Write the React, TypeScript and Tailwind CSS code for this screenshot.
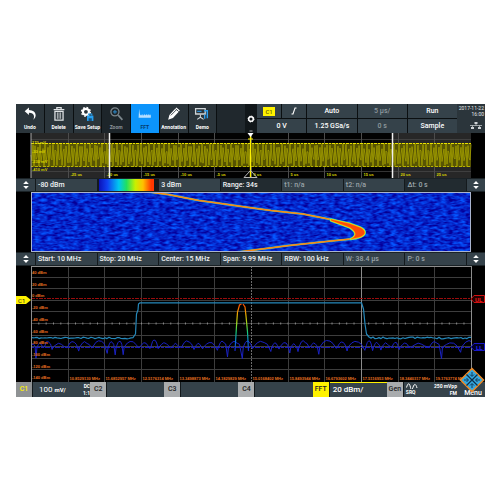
import React from "react";

const FONT = "font-['Roboto','Noto_Sans',sans-serif]";

function seeded(seed: number) {
  let s = seed;
  return () => {
    s = (s * 16807) % 2147483647;
    return s / 2147483647;
  };
}

/* ---------- toolbar ---------- */

const icons: Record<string, React.ReactNode> = {
  Undo: (
    <path d="M6.500 1.500 2.500 5 6.500 8.500V6.300c3 0 4.800 1.500 4.800 3.700 0 1-.3 2-.8 3 1.500-1.200 2.300-2.600 2.300-4.300C12.800 5.700 10.500 3.900 6.500 3.700z" fill="#fff" />
  ),
  Delete: (
    <g fill="none" stroke="#dfe3e5">
      <path d="M2.500 3.500h10M5.500 3V1.500h4V3" strokeWidth="1.200" />
      <path d="M3.700 5v8.300h7.600V5z" strokeWidth="1.200" />
      <path d="M6 6v6M7.500 6v6M9 6v6" strokeWidth=".7" />
    </g>
  ),
  "Save Setup": (
    <g>
      <circle cx="6.500" cy="5.500" r="2.800" fill="none" stroke="#fff" strokeWidth="2" />
      <circle cx="6.500" cy="5.500" r="4.100" fill="none" stroke="#fff" strokeWidth="1.300" strokeDasharray="1.600 1.620" />
      <path d="M7.500 9h6v5h-6z" fill="#27a0f0" />
      <path d="M9 9V7.500h3V9" fill="none" stroke="#27a0f0" />
      <path d="M9 11.500h3V14H9z" fill="#14507c" />
    </g>
  ),
  Zoom: (
    <g fill="none" stroke="#7c878d">
      <circle cx="6.500" cy="5.500" r="3.800" strokeWidth="1.200" />
      <path d="M9.500 8.500l4 4.500" strokeWidth="1.600" />
      <path d="M4.700 5.500h3.600M6.500 3.700v3.600" stroke="#2b7fb8" strokeWidth="1.100" />
    </g>
  ),
  FFT: (
    <path d="M2 2.500 2.600 7l.7 2 .7-1 .7 1.200.8-1.700.7 1.700.9-1.700.8 1.500.9-1.500.8 1.500.9-1.600.8 1.600.9-1.200.8 1.200v2H1.500z" fill="#b5deff" />
  ),
  Annotation: (
    <g>
      <path d="M9.700 1.500 13 4.300 6.500 11.300 2 13l1.200-4.500z" fill="#fff" />
      <path d="M4.500 8.800 10 3.300M8.800 2.500l3.200 2.800" stroke="#2b353b" strokeWidth=".8" />
    </g>
  ),
  Demo: (
    <g fill="none" stroke="#cfd5d8">
      <path d="M1.500 2.500h9v5h-9z" strokeWidth="1.200" />
      <path d="M6 8v2.500M3 12.500l3-2 3 2" strokeWidth="1" />
      <path d="M3 5h4" stroke="#2b9ff0" />
      <path d="M9.500 4.500h3v7M10 12v-4" stroke="#2b9ff0" strokeWidth="1.300" />
    </g>
  ),
};

const tools = ["Undo", "Delete", "Save Setup", "Zoom", "FFT", "Annotation", "Demo"];

function toolClass(name: string) {
  if (name === "FFT") return "bg-[#0c94fb] text-[#053a6b]";
  if (name === "Zoom") return "bg-[#1d252a] text-[#8b9398]";
  return "bg-[#2b353b] text-white";
}

function Tool({ name }: { name: string }) {
  return (
    <button className={`flex min-w-0 flex-1 flex-col items-center gap-[2px] pt-[2px] ${toolClass(name)}`}>
      <svg viewBox="0 0 15 15" className="h-4 w-4" aria-hidden="true">{icons[name]}</svg>
      <span className="text-[5px] leading-[6px] font-bold whitespace-nowrap">{name}</span>
    </button>
  );
}

function Cell({ children, dim }: { children: React.ReactNode; dim?: boolean }) {
  return (
    <div className={`flex items-center justify-center bg-[#35424a] whitespace-nowrap ${dim ? "text-[#8f999e]" : "text-white"}`}>
      {children}
    </div>
  );
}

function Toolbar() {
  return (
    <header className="grid h-[29px] grid-cols-[229fr_12px_200fr_28px] bg-[#0b0f11]">
      <div className="flex gap-px">
        {tools.map((t) => <Tool key={t} name={t} />)}
        <div className="flex-1 bg-[#20282d]" />
      </div>
      <button aria-label="Settings" className="flex flex-col items-center justify-center bg-[#11171a]">
        <svg viewBox="0 0 12 29" className="h-[29px] w-3" aria-hidden="true">
          <circle cx="6" cy="15" r="2.300" fill="none" stroke="#fff" strokeWidth="1.500" />
          <circle cx="6" cy="15" r="3" fill="none" stroke="#fff" strokeDasharray="1.200 1.156" />
          <path d="M4.500 27h3" stroke="#aaa" />
        </svg>
      </button>
      <div className="grid grid-cols-4 grid-rows-2 gap-px text-[7px] leading-[10px] font-medium">
        <div className="grid grid-cols-2 gap-px">
          <Cell><span className="bg-[#fff200] px-[2px] text-[6px] leading-[9px] text-[#6b6500]">C1</span></Cell>
          <Cell>
            <svg viewBox="0 0 8 8" className="h-2 w-2" aria-label="Rising edge"><path d="M1.500 7h1.500L5 1h1.500" fill="none" stroke="#fff" strokeWidth="1.100" /></svg>
          </Cell>
        </div>
        <Cell>Auto</Cell>
        <Cell dim>5 µs/</Cell>
        <Cell>Run</Cell>
        <Cell>0 V</Cell>
        <Cell>1.25 GSa/s</Cell>
        <Cell dim>0 s</Cell>
        <Cell>Sample</Cell>
      </div>
      <div className="flex flex-col items-end bg-[#2b353b] pt-px pr-px text-[5px] leading-[6px] text-[#e6e9ea]">
        <span className="whitespace-nowrap">2017-11-22</span>
        <span>16:00</span>
        <svg viewBox="0 0 12 9" className="mt-1 mr-[2px] h-[9px] w-3" aria-label="Network">
          <path d="M4.500 1h3v2h-3zM1 6h3v2H1zM8 6h3v2H8z" fill="#cdd2d5" />
          <path d="M0 4.500h12M6 3v1.500M2.500 4.500V6M9.500 4.500V6" stroke="#cdd2d5" strokeWidth=".7" fill="none" />
        </svg>
      </div>
    </header>
  );
}

/* ---------- time domain ---------- */

const columns = Array.from({ length: 11 }, (_, i) => Math.round((i + 1) * 36.67) + 0.5);

function wavePath() {
  const pts: string[] = [];
  for (let i = 0; i <= 440; i++) {
    const y = 22 + 11.5 * Math.sin(i * 2.45 + 1.6 * Math.sin(i * 0.09));
    pts.push(`${i},${y.toFixed(1)}`);
  }
  return pts.join(" ");
}

const times = ["-25 us", "-20 us", "-15 us", "-10 us", "-5 us", "0 us", "5 us", "10 us", "15 us", "20 us", "25 us"];
const volts: [string, number][] = [["170 mV", 11], ["-30 mV", 20], ["-230 mV", 30], ["-410 mV", 38]];

function TimePlot() {
  return (
    <svg viewBox="0 0 469 45" className="block w-full bg-black" role="img" aria-label="Time domain signal">
      <g transform="translate(15 0)">
        <path d="M0 0h440v45H0z" fill="#272727" />
        <path d="M79 0h282v45H79z" fill="#020202" />
        <path d="M0 6.500h440M0 38.500h440" stroke="#4a4a4a" strokeOpacity=".7" />
        {columns.map((x) => <path key={x} d={`M${x} 0v45`} stroke="#4c4c4c" />)}
        <path d="M0 10h440v24H0z" fill="#5e5b00" fillOpacity=".9" />
        <polyline points={wavePath()} fill="none" stroke="#a39f00" strokeWidth=".8" />
        <path d="M0 10.500h440" stroke="#e9e200" strokeDasharray="3 1 2 1" />
        <path d="M0 33.500h440" stroke="#b8b200" strokeDasharray="2 2 3 1" />
        <g className="font-['Liberation_Sans',sans-serif] text-[4px] font-bold" fill="#dcd600">
          {times.map((t, i) => <text key={t} x={columns[i] + 2} y="42.500">{t}</text>)}
          {volts.map(([t, y]) => <text key={t} x="1" y={y}>{t}</text>)}
        </g>
        <path d="M78.500 0v45M361.500 0v45" stroke="#f0f0f0" strokeWidth="1.500" />
        <path d="M219.500 3v42" stroke="#fff200" strokeWidth="1.300" />
        <path d="M216.500 0h6l-3 4z" fill="#fff" />
        <path d="M217 6h5" stroke="#fff200" />
        <path d="M213 44.500l6.500-7 6.500 7z" fill="none" stroke="#b9b9b9" />
        <path d="M0 0v45" stroke="#aaa" />
      </g>
    </svg>
  );
}

/* ---------- parameter bars ---------- */

function Spinner({ label }: { label: string }) {
  return (
    <button aria-label={label} className="flex items-center justify-center bg-[#35424a]">
      <svg viewBox="0 0 8 10" className="h-[10px] w-2" aria-hidden="true">
        <path d="M1.200 4 4 1l2.800 3zM1.200 6 4 9l2.800-3z" fill="#fff" />
      </svg>
    </button>
  );
}

type Param = { text: string; dim?: boolean; dark?: boolean };

function ParamBar({ items, label }: { items: (Param | "scale")[]; label: string }) {
  return (
    <div className="grid h-[14px] grid-cols-[19px_repeat(7,minmax(0,1fr))_18px] gap-px border-y border-[#1a2226] bg-[#141a1d] text-[7px] leading-[12px] font-medium">
      <Spinner label={`${label} previous`} />
      {items.map((it, i) =>
        it === "scale" ? (
          <div key={i} className="mr-1 ml-px bg-[linear-gradient(90deg,#0b12b8_0%,#1040f0_15%,#00c8f0_36%,#20e060_50%,#c8f000_66%,#ffc000_80%,#ff3800_95%)]" />
        ) : (
          <div key={i} className={`px-[2px] whitespace-nowrap ${it.dark ? "bg-[#222b30]" : "bg-[#35424a]"} ${it.dim ? "text-[#9ba4a9]" : "text-[#f1f3f4]"}`}>
            {it.text}
          </div>
        )
      )}
      <Spinner label={`${label} next`} />
    </div>
  );
}

/* ---------- spectrogram ---------- */

const RIDGE =
  "M118 0 137 2.500 155 6 168 8.500 190 11.500 207 14 240 18.500 272 22 300 27.500 318 32 329 37 C333 40 332 44 325 46.500 L300 49 258 53.500 235 56.500 207 60";
const CREST =
  "M300 27.500 318 31.500 329 35.500 C336 39 335 43.500 327 45.500 L320 47 C326 44 326 40 319 35.500 L300 28.500Z";

function Spectrogram() {
  return (
    <svg viewBox="0 0 469 60" className="block w-full bg-black" role="img" aria-label="Spectrogram">
      <defs>
        <filter id="grain" x="0" y="0" width="100%" height="100%" colorInterpolationFilters="sRGB">
          <feTurbulence type="fractalNoise" baseFrequency="0.16 0.4" numOctaves="2" seed="4" />
          <feColorMatrix values="0 0 0 0 0.02  0.65 0 0 0 -0.17  0.75 0 0 0 0.42  0 0 0 0 1" />
        </filter>
        <clipPath id="area"><path d="M15 0h440v60H15z" /></clipPath>
      </defs>
      <g clipPath="url(#area)">
        <path d="M15 0h440v60H15z" fill="#0726c8" />
        <path d="M15 0h440v60H15z" filter="url(#grain)" />
        <g transform="translate(15 0)" fill="none" strokeLinejoin="round">
          <path d={RIDGE} stroke="#18b8d0" strokeWidth="2.400" strokeOpacity=".6" />
          <path d={RIDGE} stroke="#f0c020" strokeWidth="1.500" />
          <path d={RIDGE} stroke="#ff6a10" strokeWidth=".8" />
          <path d={CREST} stroke="#20d8c0" strokeWidth="2.800" />
          <path d={CREST} stroke="#ffe000" strokeWidth="1.600" />
          <path d={CREST} fill="#ff4a08" stroke="#ff7a00" strokeWidth=".4" />
        </g>
        <path d="M15.500 0v60M454.500 0v60M15 .5h440M15 59.500h440" stroke="#a9b4d0" fill="none" />
      </g>
    </svg>
  );
}

/* ---------- spectrum ---------- */

const levels = ["40 dBm", "20 dBm", "0 dBm", "-20 dBm", "-40 dBm", "-60 dBm", "-80 dBm", "-100 dBm", "-120 dBm", "-140 dBm"];
const freqs = [
  "10.8529130 MHz", "11.6852957 MHz", "12.5176314 MHz", "13.3498873 MHz", "14.1829829 MHz", "15.0168402 MHz",
  "15.8493944 MHz", "16.6793602 MHz", "17.5116953 MHz", "18.3440317 MHz", "19.1763774 MHz",
];

function maxTrace() {
  const r = seeded(11);
  const pts: string[] = [];
  for (let x = 0; x <= 103; x += 2) pts.push(`${x},${(71.8 + r() * 1.6 - 0.6).toFixed(1)}`);
  pts.push("104.500,68 105.500,48 107,44 107.500,38 109,36.800 330.500,36.800 332.500,43 334,58 335.500,68 338,71");
  for (let x = 340; x <= 440; x += 2) pts.push(`${x},${(71.8 + r() * 1.8 - 0.8).toFixed(1)}`);
  return pts.join(" ");
}

function floorTrace() {
  const r = seeded(37);
  const f = (n: number) => n.toFixed(1);
  let d = "M0 80";
  let x = 0;
  while (x < 440) {
    const w = 5 + r() * 14;
    const top = 74 + r() * 4;
    const dip = 81 + r() * r() * 12;
    const a = x + w;
    d += ` L${f(x + w * 0.22)} ${f(top + 1.5)} L${f(x + w * 0.4)} ${f(top)} L${f(x + w * 0.62)} ${f(top + r() * 2)} L${f(x + w * 0.8)} ${f(top + 3)} L${f(a)} ${f(dip)} L${f(a + 1)} 81`;
    x = a + 1;
  }
  return d;
}

function Spectrum() {
  const rows = Array.from({ length: 9 }, (_, i) => Math.round((i + 1) * 11.6) - 0.5);
  return (
    <svg viewBox="0 0 469 116" className="block w-full bg-black" role="img" aria-label="Spectrum">
      <defs>
        <linearGradient id="peak" gradientUnits="userSpaceOnUse" x1="0" y1="38" x2="0" y2="86">
          <stop offset="0" stopColor="#ff4a00" />
          <stop offset=".22" stopColor="#f0b000" />
          <stop offset=".42" stopColor="#90d820" />
          <stop offset=".6" stopColor="#10c880" />
          <stop offset=".78" stopColor="#0a78d8" />
          <stop offset="1" stopColor="#1818c0" />
        </linearGradient>
        <clipPath id="plot"><path d="M0 0h440v116H0z" /></clipPath>
      </defs>
      <g transform="translate(15 0)">
        {rows.map((y) => <path key={y} d={`M0 ${y}h440`} stroke="#3d3d3d" />)}
        {columns.map((x, i) => (
          <path key={x} d={`M${x} 0v116`} stroke={i === 8 ? "#8b8b8b" : i === 5 ? "#6b6b6b" : "#3d3d3d"} strokeDasharray={i === 5 ? "2 1" : undefined} />
        ))}
        <path d="M0 57.500h440" stroke="#8a8a8a" strokeWidth="2" strokeDasharray="1 6.330" />
        <path d="M0 32.500h440" stroke="#9a0c0c" strokeDasharray="4 1 2 1" />
        <path d="M0 81.500h440" stroke="#1a1ab8" strokeDasharray="3 1 5 1" />
        <g clipPath="url(#plot)" fill="none" strokeLinejoin="round">
          <path d={floorTrace()} stroke="#1a22c4" />
          <polyline points={maxTrace()} stroke="#2588ba" strokeWidth="1.200" />
        </g>
        <path d="M204 85 205.500 60 206.500 46 208.500 39 210.500 38M212 38 214 41 215 50 216.500 66 217.500 85" fill="none" stroke="url(#peak)" strokeWidth="1.200" />
        <g className="font-['Liberation_Sans',sans-serif] text-[4px] font-bold" fill="#e87020">
          {levels.map((t, i) => <text key={t} x="1" y={8 + Math.round(i * 11.7)}>{t}</text>)}
          {freqs.map((t, i) => <text key={t} x={columns[i] + 1} y="113.500">{t}</text>)}
        </g>
        <path d="M.5 0v116M440.500 0v116M0 .5h440" stroke="#8d8d8d" fill="none" />
      </g>
      <path d="M0 30h10l5 4-5 4H0z" fill="#fff200" />
      <text x="2" y="36.500" className="text-[6px]" fill="#222">C1</text>
      <path d="M455 33l3-3.500h10.500v7H458z" fill="#200" stroke="#d01010" />
      <text x="459" y="35.500" className="text-[6px] font-bold" fill="#f01818">UL</text>
      <path d="M455 81l3-3.500h10.500v7H458z" fill="#002" stroke="#1818c8" />
      <text x="460" y="83.500" className="text-[6px] font-bold" fill="#2020f0">LL</text>
    </svg>
  );
}

/* ---------- channel bar ---------- */

function Channel({ tab, tabClass, children, active }: { tab: string; tabClass: string; children?: React.ReactNode; active?: boolean }) {
  return (
    <div className="flex min-w-0 gap-px">
      <button className={`w-4 shrink-0 text-center text-[7px] leading-[15px] font-medium ${tabClass}`}>{tab}</button>
      <div className={`flex min-w-0 flex-1 items-center justify-between bg-[#35424a] text-white ${active ? "border-t border-[#fff200]" : ""}`}>
        {children}
      </div>
    </div>
  );
}

function ChannelBar() {
  const grey = "bg-[#a9acae] text-[#1d1d1d]";
  return (
    <footer className="relative grid h-[15px] grid-cols-[repeat(6,minmax(0,1fr))_24px] bg-[#12181b]">
      <Channel tab="C1" tabClass="bg-[#8f9294] text-[#fff200]">
        <span className="pl-[6px] text-[8px] leading-[15px] whitespace-nowrap">100 <span className="text-[6px] font-bold">mV/</span></span>
        <span className="text-right text-[5px] leading-[7px] font-bold">DC<br />1:1</span>
      </Channel>
      <Channel tab="C2" tabClass={grey} />
      <Channel tab="C3" tabClass={grey} />
      <Channel tab="C4" tabClass={grey} />
      <Channel tab="FFT" tabClass="bg-[#fff200] text-[#222]" active>
        <span className="pl-[3px] text-[8px] leading-[14px] font-medium whitespace-nowrap">20 dBm/</span>
      </Channel>
      <Channel tab="Gen" tabClass={grey}>
        <span className="pl-[2px] text-[5px] leading-[7px] font-bold">
          <svg viewBox="0 0 12 6" className="h-[6px] w-3" aria-hidden="true"><path d="M.5 4.500c1.500-5 3-5 4 0s2 1 3-1.500 2.500-2 3.500 2" fill="none" stroke="#fff" /></svg>
          SRQ
        </span>
        <span className="pr-1 text-right text-[5px] leading-[7px] font-bold whitespace-nowrap">250 mVpp<br />FM</span>
      </Channel>
      <button className="flex items-end justify-center bg-[#35424a] text-[7px] leading-[7px] font-medium text-white">Menu</button>
      <svg viewBox="0 0 26 26" className="pointer-events-none absolute right-0 bottom-1 h-[26px] w-[26px]" aria-hidden="true">
        <path d="M13 1.500 24.500 13 13 24.500 1.500 13z" fill="#35a8e0" stroke="#f08a24" strokeWidth="1.500" />
        <g fill="none" stroke="#0d2f48" strokeWidth="1.300">
          <path d="M7.500 7.500l11 11M18.500 7.500l-11 11" />
          <path d="M13 5v4M11 7.500l2 2 2-2M13 21v-4M11 18.500l2-2 2 2M5 13h4M7.500 11l2 2-2 2M21 13h-4M18.500 11l-2 2 2 2" strokeWidth=".9" />
        </g>
      </svg>
    </footer>
  );
}

export default function App() {
  return (
    <div className={`min-h-screen bg-white pt-[104px] pr-[15px] pb-8 pl-4 ${FONT}`}>
      <main className="bg-black">
        <Toolbar />
        <TimePlot />
        <ParamBar
          label="Spectrogram"
          items={[
            { text: "-80 dBm" }, "scale", { text: "3 dBm" }, { text: "Range: 34s", dark: true },
            { text: "t1: n/a", dim: true }, { text: "t2: n/a", dim: true }, { text: "Δt: 0 s", dim: true, dark: true },
          ]}
        />
        <Spectrogram />
        <ParamBar
          label="Spectrum"
          items={[
            { text: "Start: 10 MHz" }, { text: "Stop: 20 MHz" }, { text: "Center: 15 MHz" }, { text: "Span: 9.99 MHz" },
            { text: "RBW: 100 kHz" }, { text: "W: 38.4 µs", dim: true }, { text: "P: 0 s", dim: true },
          ]}
        />
        <Spectrum />
        <ChannelBar />
      </main>
    </div>
  );
}
